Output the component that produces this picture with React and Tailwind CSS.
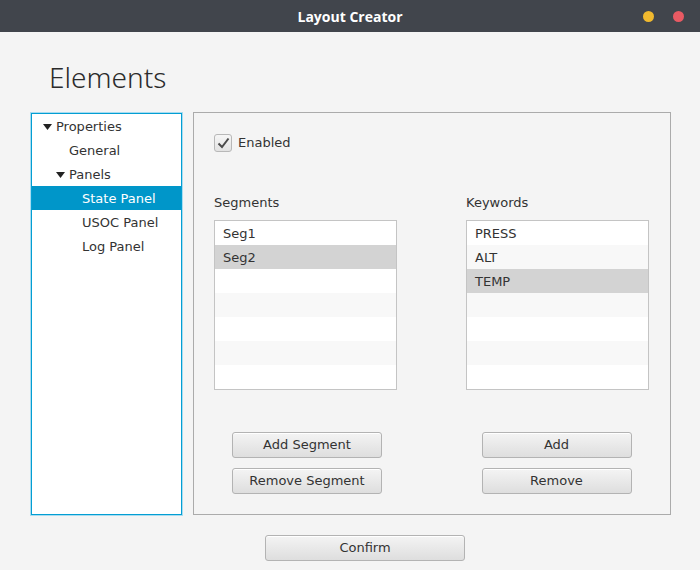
import React from "react";

const ui = { fontFamily: '"DejaVu Sans", "Liberation Sans", sans-serif' };

function Triangle() {
  return (
    <svg width="9" height="6" viewBox="0 0 9 6" className="shrink-0">
      <path d="M0 0 L9 0 L4.5 6 Z" fill="#222" />
    </svg>
  );
}

function TreeRow({ level, label, arrow, selected }) {
  return (
    <div
      className={`h-6 flex items-center pt-px text-[13px] ${selected ? "bg-[#0096c9] text-white" : "text-[#333]"}`}
      style={{ paddingLeft: 11 + level * 13 }}
    >
      <div className="w-[13px] flex items-center">{arrow && <Triangle />}</div>
      <span>{label}</span>
    </div>
  );
}

function ListBox({ items, selected }) {
  const rows = Array.from({ length: 7 }, (_, i) => items[i] ?? "");
  return (
    <div className="w-[183px] h-[170px] border border-[#c4c4c4] bg-white">
      {rows.map((r, i) => (
        <div
          key={i}
          className={`h-6 flex items-center pl-2 pt-px text-[13px] text-[#333] ${
            i === selected ? "bg-[#d3d3d3]" : i % 2 ? "bg-[#f8f8f8]" : "bg-white"
          }`}
        >
          {r}
        </div>
      ))}
    </div>
  );
}

function Btn({ children, w = "w-[150px]" }) {
  return (
    <button
      className={`${w} h-[26px] rounded-[3px] border border-[#b3b3b3] bg-gradient-to-b from-[#f4f4f4] to-[#dedede] text-[13px] text-[#333] shadow-[inset_0_1px_0_#fff]`}
    >
      {children}
    </button>
  );
}

export default function App() {
  return (
    <div className="w-[700px] h-[570px] bg-[#f4f4f4] overflow-hidden" style={ui}>
      <div className="h-8 bg-[#41454c] flex items-center relative">
        <div
          className="flex-1 text-center text-white text-[14px] font-bold"
          style={{ fontFamily: '"Open Sans", "Liberation Sans", sans-serif' }}
        >
          Layout Creator
        </div>
        <div className="absolute right-[16px] top-[11px] flex gap-[19px]">
          <div className="w-[11px] h-[11px] rounded-full bg-[#f0b92f]" />
          <div className="w-[11px] h-[11px] rounded-full bg-[#e85a63]" />
        </div>
      </div>

      <div
        className="pl-[49px] pt-[27px] h-[80px] text-[28px] text-[#2b2b2b] leading-[36px]"
        style={{ fontFamily: '"Noto Sans", "Open Sans", sans-serif', fontWeight: 300 }}
      >
        Elements
      </div>

      <div className="flex pl-[31px] gap-[11px]">
        <div className="w-[151px] h-[402px] mt-px border border-[#039ed3] shadow-[0_0_0_1px_#a8dcf0] bg-white">
          <TreeRow level={0} label="Properties" arrow />
          <TreeRow level={1} label="General" />
          <TreeRow level={1} label="Panels" arrow />
          <TreeRow level={2} label="State Panel" selected />
          <TreeRow level={2} label="USOC Panel" />
          <TreeRow level={2} label="Log Panel" />
        </div>

        <div className="w-[478px] h-[403px] border border-[#ababab] pl-[20px] pt-[21px]">
          <div className="flex items-center gap-[6px] h-[18px]">
            <div className="w-[18px] h-[18px] rounded-[3px] border border-[#b8b8b8] bg-gradient-to-b from-[#f6f6f6] to-[#e2e2e2] flex items-center justify-center">
              <svg width="13" height="12" viewBox="0 0 13 12">
                <path d="M1.5 6.5 L5 10 L11.5 1.5" fill="none" stroke="#4a4a4a" strokeWidth="2" />
              </svg>
            </div>
            <span className="text-[13px] text-[#333]">Enabled</span>
          </div>

          <div className="flex gap-[69px] mt-[42px]">
            <div className="flex flex-col">
              <div className="h-[18px] text-[13px] text-[#333] leading-[18px]">Segments</div>
              <div className="mt-[8px]">
                <ListBox items={["Seg1", "Seg2"]} selected={1} />
              </div>
              <div className="flex flex-col items-center gap-[10px] mt-[42px] pl-[3px]">
                <Btn>Add Segment</Btn>
                <Btn>Remove Segment</Btn>
              </div>
            </div>
            <div className="flex flex-col">
              <div className="h-[18px] text-[13px] text-[#333] leading-[18px]">Keywords</div>
              <div className="mt-[8px]">
                <ListBox items={["PRESS", "ALT", "TEMP"]} selected={2} />
              </div>
              <div className="flex flex-col items-center gap-[10px] mt-[42px] pr-[2px]">
                <Btn>Add</Btn>
                <Btn>Remove</Btn>
              </div>
            </div>
          </div>
        </div>
      </div>

      <div className="pl-[265px] mt-[20px]">
        <Btn w="w-[200px]">Confirm</Btn>
      </div>
    </div>
  );
}
